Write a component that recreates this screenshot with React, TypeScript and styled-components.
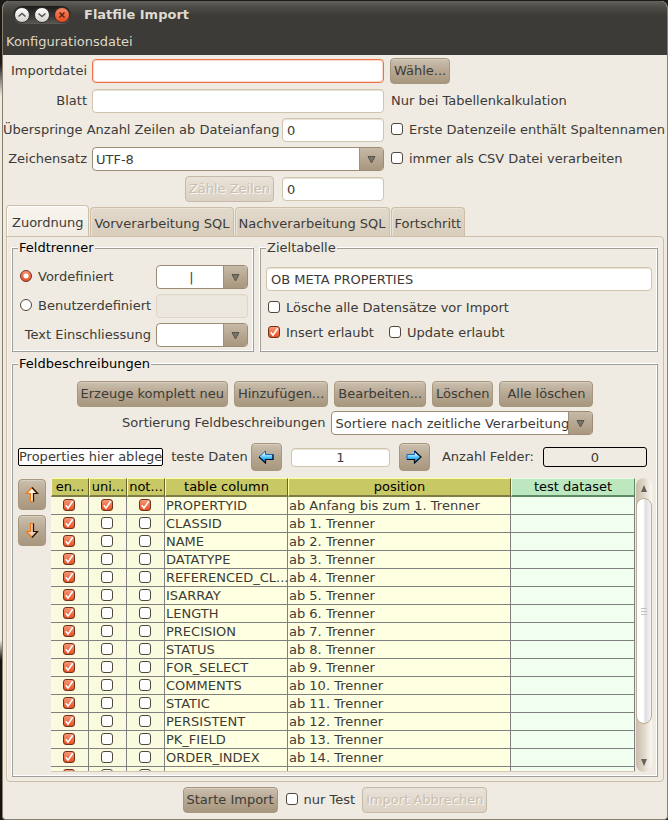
import React from "react";
import styled, { createGlobalStyle, css } from "styled-components";

const GlobalStyle = createGlobalStyle`
  * { box-sizing: border-box; }
  body { margin: 0; }
  body, button, input, select {
    font-family: "DejaVu Sans", sans-serif;
    font-size: 13px;
    line-height: 16px;
    color: #3c3b37;
  }
`;

const Desktop = styled.div`
  height: 100vh;
  min-height: 640px;
  padding: 1px 0 0 2px;
  background: linear-gradient(#1c1b1a 0 64px, #ecebe4 96px 640px, #151413 660px);
`;

const Window = styled.main`
  height: 100%;
  display: flex;
  flex-direction: column;
  background: #efeae2;
  border: 1px solid #8a7f6c;
  border-top: 0;
  border-radius: 7px 7px 4px 4px;
  overflow: hidden;
`;

const TitleBar = styled.header`
  display: flex;
  align-items: center;
  gap: 13px;
  height: 29px;
  padding: 0 0 2px 10px;
  background: linear-gradient(#63605a, #4b4944 7px, #3c3b37 15px);
`;

const WindowControls = styled.div`
  display: flex;
  align-items: center;
  gap: 4px;
  height: 18px;
  padding: 0 1px;
  border-radius: 9px;
  background: linear-gradient(#1d1c1a, #3a3935 60%, #5d5b56);
`;

const RoundButton = styled.button<{ $close?: boolean }>`
  display: grid;
  place-items: center;
  width: 16px;
  height: 16px;
  padding: 0;
  border: 1px solid #33322f;
  border-radius: 50%;
  background: ${(p) => (p.$close ? "linear-gradient(#f58a68, #e6481b)" : "linear-gradient(#ffffff, #d2d0cd)")};
`;

const Title = styled.h1`
  margin: 0;
  font-size: 13px;
  line-height: 18px;
  font-weight: bold;
  color: #dfdbd2;
`;

const MenuBar = styled.nav`
  height: 25px;
  padding: 4px 3px;
  background: #3c3b37;
`;

const MenuButton = styled.button`
  padding: 0;
  border: 0;
  background: none;
  color: #dfd8c8;
`;

const Form = styled.div`
  display: grid;
  grid-template-columns: 84px minmax(0, 1fr) 102px 278px;
  grid-template-rows: 26px 24px 24px 24px 26px;
  gap: 5px;
  align-items: center;
  padding-top: 3px;
`;

const FieldLabel = styled.label<{ $wide?: boolean }>`
  text-align: right;
  white-space: nowrap;
  ${(p) => p.$wide && css`grid-column: span 2;`}
`;

const WideSlot = styled.div`
  display: grid;
  grid-column: span 2;
`;

const RightSlot = styled.div`
  grid-column: 4;
  display: flex;
  padding-left: 1px;
`;

const CountSlot = styled.div`
  grid-column: span 2;
  display: flex;
  justify-content: flex-end;
  padding-right: 3px;
`;

const TextInput = styled.input<{ $active?: boolean; $center?: boolean }>`
  width: 100%;
  min-width: 0;
  height: 24px;
  padding: 1px 4px 0;
  border: 1px solid ${(p) => (p.$active ? "#ef7046" : "#cfc4ae")};
  border-radius: 4px;
  background: #fff;
  outline: 0;
  text-align: ${(p) => (p.$center ? "center" : "left")};
  box-shadow: ${(p) => (p.$active ? "inset 0 0 0 1px #fbd9cb" : "inset 0 1px 0 #e9e3d8")};
  &:disabled { background: #ece7de; border-color: #ddd5c7; }
`;

const Button = styled.button<{ $roomy?: boolean }>`
  height: 26px;
  min-width: ${(p) => (p.$roomy ? "94px" : "0")};
  padding: 0 3px;
  white-space: nowrap;
  border: 1px solid #a8977f;
  border-radius: 4px;
  background: linear-gradient(#cbbfae, #b8a994 45%, #a8977e);
  box-shadow: inset 0 1px 0 #d8cebf;
  &:disabled {
    color: #c9bfb0;
    text-shadow: 1px 1px 0 #fbf8f3;
    border-color: #c5b9a7;
    background: linear-gradient(#e9e2d8, #ddd2c4);
    box-shadow: none;
  }
`;

const ComboFrame = styled.span<{ $width?: number }>`
  display: grid;
  grid-template-columns: minmax(0, 1fr) 24px;
  height: 24px;
  width: ${(p) => (p.$width ? `${p.$width}px` : "100%")};
  border: 1px solid #9c8c74;
  border-radius: 4px;
  overflow: hidden;
  background: #fff;
`;

const ComboSelect = styled.select<{ $center?: boolean }>`
  grid-area: 1 / 1 / 2 / 3;
  appearance: none;
  width: 100%;
  padding: 1px 24px 0 3px;
  border: 0;
  background: none;
  outline: 0;
  text-align-last: ${(p) => (p.$center ? "center" : "left")};
`;

const ComboArrow = styled.span`
  grid-area: 1 / 2;
  display: grid;
  place-items: center;
  pointer-events: none;
  border-left: 1px solid #a08f78;
  background: linear-gradient(#c6b9a7, #a8977e);
`;

function Combo(props: { id: string; value: string; label?: string; width?: number; center?: boolean }) {
  return (
    <ComboFrame $width={props.width}>
      <ComboSelect id={props.id} aria-label={props.label} $center={props.center}>
        <option>{props.value}</option>
      </ComboSelect>
      <ComboArrow>
        <svg width="9" height="9" viewBox="0 0 9 9">
          <path d="M1 1.5h7L4.500 8z" fill="#7a7367" stroke="#5a554c" />
        </svg>
      </ComboArrow>
    </ComboFrame>
  );
}

const Mark = styled.span`
  display: grid;
  flex: none;
  width: 12px;
  height: 12px;
  margin-bottom: 2px;
  > * { grid-area: 1 / 1; }
  > svg { visibility: hidden; pointer-events: none; }
  > input:checked + svg { visibility: visible; }
`;

const MarkInput = styled.input`
  appearance: none;
  width: 12px;
  height: 12px;
  margin: 0;
  border: 1px solid #4f483e;
  border-radius: ${(p) => (p.type === "radio" ? "50%" : "3px")};
  background: #fff;
  &:checked {
    border-color: #70301c;
    background: linear-gradient(#f79677, #e9501f);
  }
`;

const CheckLabel = styled.label`
  display: flex;
  align-items: center;
  gap: 6px;
  padding-left: 1px;
  white-space: nowrap;
`;

function CheckMark(props: { checked?: boolean; label?: string }) {
  return (
    <Mark>
      <MarkInput type="checkbox" defaultChecked={props.checked} aria-label={props.label} />
      <svg viewBox="0 0 12 12">
        <path d="M2.800 6.200l2.200 3L9.700 2.200" fill="none" stroke="#fff" strokeWidth="1.600" />
      </svg>
    </Mark>
  );
}

function Check(props: { checked?: boolean; children: string }) {
  return (
    <CheckLabel>
      <CheckMark checked={props.checked} />
      {props.children}
    </CheckLabel>
  );
}

function Radio(props: { checked?: boolean; children: string }) {
  return (
    <CheckLabel>
      <Mark>
        <MarkInput type="radio" name="separator" defaultChecked={props.checked} />
        <svg viewBox="0 0 12 12">
          <circle cx="6" cy="6" r="2.500" fill="#fff" />
        </svg>
      </Mark>
      {props.children}
    </CheckLabel>
  );
}

const Tabs = styled.div`
  display: flex;
  align-items: flex-end;
  gap: 1px;
  margin: 3px 3px 0;
`;

const Tab = styled.button<{ $selected?: boolean }>`
  height: 29px;
  padding: 4px 3px 0;
  white-space: nowrap;
  border: 1px solid #cbbfa9;
  border-bottom: 0;
  border-radius: 4px 4px 0 0;
  background: linear-gradient(#e2d9cb, #d9cdbb);
  box-shadow: inset 1px 1px 0 #e9e2d6;
  ${(p) =>
    p.$selected &&
    css`
      height: 32px;
      padding: 2px 5px 0;
      margin-bottom: -1px;
      background: linear-gradient(#f8f5f0, #efeae2);
      box-shadow: inset 1px 1px 0 #fff;
    `}
`;

const TabPanel = styled.section`
  flex: 1;
  min-height: 0;
  display: flex;
  flex-direction: column;
  gap: 4px;
  margin: 0 3px;
  padding: 3px 5px 4px;
  border: 1px solid #cbbfa9;
  border-radius: 0 4px 4px 4px;
  box-shadow: inset 1px 0 0 #f7f4ee;
`;

const GroupRow = styled.div`
  display: grid;
  grid-template-columns: 242px minmax(0, 1fr);
  gap: 6px;
`;

const Group = styled.fieldset<{ $fill?: boolean }>`
  min-width: 0;
  margin: 0;
  padding: 9px 5px 4px;
  border: 1px solid #a09e99;
  box-shadow: -1px -1px 0 #fff, inset -1px -1px 0 #fff;
  ${(p) =>
    p.$fill &&
    css`
      flex: 1;
      min-height: 0;
      display: flex;
      flex-direction: column;
    `}
`;

const Legend = styled.legend<{ $muted?: boolean }>`
  padding: 0 1px;
  color: ${(p) => (p.$muted ? "#3c3b37" : "#000")};
  background: #efeae2;
`;

const SeparatorGrid = styled.div`
  display: grid;
  grid-template-columns: minmax(0, 1fr) 92px;
  grid-auto-rows: 24px;
  gap: 5px;
  align-items: center;
  padding-left: 1px;
`;

const TargetStack = styled.div`
  display: flex;
  flex-direction: column;
  gap: 9px;
  padding-top: 2px;
`;

const CheckRow = styled.div`
  display: flex;
  gap: 14px;
  padding-left: 1px;
`;

const ActionBlock = styled.div`
  align-self: center;
  display: flex;
  flex-direction: column;
  gap: 4px;
`;

const ActionRow = styled.div`
  display: flex;
  align-items: center;
  justify-content: flex-end;
  gap: 6px;
`;

const TestRow = styled.div`
  display: flex;
  align-items: center;
  margin-top: 8px;
  padding-right: 5px;
`;

const DropTarget = styled.div`
  flex: none;
  display: flex;
  justify-content: center;
  align-items: center;
  min-width: 139px;
  height: 18px;
  margin-right: 8px;
  white-space: nowrap;
  background: #fff;
  border: 1px solid #000;
  border-radius: 2px;
`;

const TestLabel = styled.label`
  white-space: nowrap;
  padding-right: 3px;
`;

const IconButton = styled(Button)<{ $tall?: boolean }>`
  display: grid;
  place-items: center;
  flex: none;
  width: ${(p) => (p.$tall ? "28px" : "31px")};
  height: ${(p) => (p.$tall ? "31px" : "28px")};
  padding: 0;
`;

const IndexInput = styled(TextInput)`
  flex: 1;
  height: 19px;
  margin: 0 9px;
`;

const CountLabel = styled.span`
  padding: 0 9px 0 12px;
  white-space: nowrap;
`;

const Count = styled.output`
  flex: none;
  width: 104px;
  height: 20px;
  padding-top: 2px;
  text-align: center;
  border: 1px solid #000;
  border-radius: 3px;
`;

const TableArea = styled.div`
  flex: 1;
  min-height: 0;
  display: flex;
  margin-top: 7px;
`;

const OrderButtons = styled.div`
  display: flex;
  flex-direction: column;
  gap: 5px;
  padding: 1px 5px 0 0;
`;

const Viewport = styled.div`
  flex: 1;
  min-width: 0;
  overflow: hidden;
  border-bottom: 1px solid #d5c9b3;
`;

const Table = styled.table`
  width: 100%;
  table-layout: fixed;
  border-spacing: 0;
`;

const HeadCell = styled.th<{ $test?: boolean }>`
  height: 19px;
  padding: 0;
  color: #000;
  font-weight: normal;
  white-space: nowrap;
  border-style: solid;
  border-width: 1px 1px 2px;
  border-color: ${(p) => (p.$test ? "#e8fbe8 #5f8a66 #5f8a66 #e8fbe8" : "#ffffa0 #64642c #7d7d45 #ffffa0")};
  background: ${(p) => (p.$test ? "#bde7bf" : "#c8c864")};
`;

const Cell = styled.td<{ $kind?: "mark" | "test" }>`
  height: 18px;
  padding: 0 0 0 1px;
  white-space: nowrap;
  border: solid #808080;
  border-width: 0 1px 1px 0;
  background: ${(p) => (p.$kind === "mark" ? "#fafadf" : p.$kind === "test" ? "#f0fff0" : "#ffffe1")};
  ${Mark} { margin-left: 11px; }
`;

const Scrollbar = styled.div`
  flex: none;
  display: flex;
  flex-direction: column;
  width: 16px;
  margin-left: 1px;
  border-radius: 8px;
  background: linear-gradient(90deg, #c9bca8, #e2dacd 55%, #fbf9f6);
`;

const ScrollStep = styled.button`
  display: grid;
  place-items: center;
  height: 20px;
  padding: 0;
  border: 0;
  background: none;
`;

const ScrollTrack = styled.div`
  flex: 1;
`;

const ScrollThumb = styled.div`
  display: grid;
  place-items: center;
  height: 89%;
  border: 1px solid #bfae94;
  border-radius: 8px;
  background: linear-gradient(90deg, #ffffff 45%, #dedede 60%, #f4f4f4);
`;

const Footer = styled.footer`
  display: flex;
  justify-content: center;
  align-items: center;
  gap: 7px;
  padding: 5px 0 6px;
`;

const rows: string[][] = [
  ["PROPERTYID", "ab Anfang bis zum 1. Trenner"],
  ...[
    "CLASSID", "NAME", "DATATYPE", "REFERENCED_CL...", "ISARRAY", "LENGTH", "PRECISION", "STATUS",
    "FOR_SELECT", "COMMENTS", "STATIC", "PERSISTENT", "PK_FIELD", "ORDER_INDEX", "",
  ].map((name, i) => [name, name && `ab ${i + 1}. Trenner`]),
];

function BlueArrow({ right }: { right?: boolean }) {
  const shape = right ? "M15 7L8.500 1v3.500H1v5h7.500V13z" : "M1 7l6.500-6v3.500H15v5H7.500V13z";
  return (
    <svg width="16" height="14" viewBox="0 0 16 14">
      <defs>
        <linearGradient id={right ? "blueRight" : "blueLeft"} x1="0" y1="0" x2="0" y2="1">
          <stop offset="0.250" stopColor="#c9f2ff" />
          <stop offset="0.600" stopColor="#38b4f6" />
          <stop offset="1" stopColor="#1679dd" />
        </linearGradient>
      </defs>
      <path d={shape} fill={right ? "url(#blueRight)" : "url(#blueLeft)"} stroke="#1265c4" />
      <path
        d={right ? "M1 9.500h7.500V13L15 7 8.500 1" : "M1 7l6.500 6V9.500H15v-5"}
        fill="none"
        stroke="#08101e"
        strokeWidth="1.200"
      />
    </svg>
  );
}

function OrangeArrow({ down }: { down?: boolean }) {
  return (
    <svg width="14" height="17" viewBox="0 0 14 17">
      <path
        d={down ? "M5.500 1.500v8H1.500L7 15.500l5.500-6h-4v-8z" : "M7 1.500l-5.500 6h4v8h3v-8h4z"}
        fill={down ? "#e6cfc0" : "#fff4e0"}
        stroke="#f07812"
        strokeWidth="1.200"
      />
      <path
        d={down ? "M8.500 1.500v8h4L7 15.500" : "M7 1.500l5.500 6h-4v8"}
        fill="none"
        stroke="#20140a"
        strokeWidth="1.200"
      />
    </svg>
  );
}

export default function App() {
  return (
    <>
      <GlobalStyle />
      <Desktop>
        <Window>
          <TitleBar>
            <WindowControls>
              <RoundButton aria-label="Einrollen">
                <svg width="10" height="10" viewBox="0 0 10 10">
                  <path d="M1.500 6.500L5 3.500l3.500 3" fill="none" stroke="#55534e" strokeWidth="1.500" />
                </svg>
              </RoundButton>
              <RoundButton aria-label="Minimieren">
                <svg width="10" height="10" viewBox="0 0 10 10">
                  <path d="M1.500 3.500l3.500 3 3.500-3" fill="none" stroke="#55534e" strokeWidth="1.500" />
                </svg>
              </RoundButton>
              <RoundButton $close aria-label="Schließen">
                <svg width="10" height="10" viewBox="0 0 10 10">
                  <path d="M2.500 2.500l5 5m0-5l-5 5" fill="none" stroke="#5d2415" strokeWidth="1.500" />
                </svg>
              </RoundButton>
            </WindowControls>
            <Title>Flatfile Import</Title>
          </TitleBar>
          <MenuBar>
            <MenuButton>Konfigurationsdatei</MenuButton>
          </MenuBar>

          <Form>
            <FieldLabel htmlFor="file">Importdatei</FieldLabel>
            <WideSlot><TextInput id="file" $active /></WideSlot>
            <RightSlot><Button>Wähle...</Button></RightSlot>

            <FieldLabel htmlFor="sheet">Blatt</FieldLabel>
            <WideSlot><TextInput id="sheet" /></WideSlot>
            <RightSlot><CheckLabel as="span">Nur bei Tabellenkalkulation</CheckLabel></RightSlot>

            <FieldLabel htmlFor="skip" $wide>Überspringe Anzahl Zeilen ab Dateianfang</FieldLabel>
            <TextInput id="skip" defaultValue="0" />
            <RightSlot><Check>Erste Datenzeile enthält Spaltennamen</Check></RightSlot>

            <FieldLabel htmlFor="charset">Zeichensatz</FieldLabel>
            <WideSlot><Combo id="charset" value="UTF-8" /></WideSlot>
            <RightSlot><Check>immer als CSV Datei verarbeiten</Check></RightSlot>

            <CountSlot><Button disabled>Zähle Zeilen</Button></CountSlot>
            <TextInput aria-label="Anzahl Zeilen" defaultValue="0" />
          </Form>

          <Tabs role="tablist">
            <Tab role="tab" aria-selected $selected>Zuordnung</Tab>
            <Tab role="tab">Vorverarbeitung SQL</Tab>
            <Tab role="tab">Nachverarbeitung SQL</Tab>
            <Tab role="tab">Fortschritt</Tab>
          </Tabs>

          <TabPanel role="tabpanel">
            <GroupRow>
              <Group>
                <Legend>Feldtrenner</Legend>
                <SeparatorGrid>
                  <Radio checked>Vordefiniert</Radio>
                  <Combo id="separator" label="Trennzeichen" value="|" center />
                  <Radio>Benutzerdefiniert</Radio>
                  <TextInput aria-label="Eigenes Trennzeichen" disabled />
                  <FieldLabel htmlFor="quote">Text Einschliessung</FieldLabel>
                  <Combo id="quote" value="" />
                </SeparatorGrid>
              </Group>
              <Group>
                <Legend $muted>Zieltabelle</Legend>
                <TargetStack>
                  <TextInput aria-label="Zieltabelle" defaultValue="OB META PROPERTIES" />
                  <CheckRow><Check>Lösche alle Datensätze vor Import</Check></CheckRow>
                  <CheckRow>
                    <Check checked>Insert erlaubt</Check>
                    <Check>Update erlaubt</Check>
                  </CheckRow>
                </TargetStack>
              </Group>
            </GroupRow>

            <Group $fill>
              <Legend>Feldbeschreibungen</Legend>
              <ActionBlock>
                <ActionRow>
                  <Button>Erzeuge komplett neu</Button>
                  <Button>Hinzufügen...</Button>
                  <Button>Bearbeiten...</Button>
                  <Button>Löschen</Button>
                  <Button $roomy>Alle löschen</Button>
                </ActionRow>
                <ActionRow>
                  <label htmlFor="sorting">Sortierung Feldbeschreibungen</label>
                  <Combo id="sorting" width={262} value="Sortiere nach zeitliche Verarbeitung" />
                </ActionRow>
              </ActionBlock>

              <TestRow>
                <DropTarget>Properties hier ablege</DropTarget>
                <TestLabel htmlFor="record">teste Daten</TestLabel>
                <IconButton aria-label="Vorheriger Datensatz"><BlueArrow /></IconButton>
                <IndexInput id="record" $center defaultValue="1" />
                <IconButton aria-label="Nächster Datensatz"><BlueArrow right /></IconButton>
                <CountLabel>Anzahl Felder:</CountLabel>
                <Count>0</Count>
              </TestRow>

              <TableArea>
                <OrderButtons>
                  <IconButton $tall aria-label="Nach oben"><OrangeArrow /></IconButton>
                  <IconButton $tall aria-label="Nach unten"><OrangeArrow down /></IconButton>
                </OrderButtons>
                <Viewport>
                  <Table>
                    <colgroup>
                      <col width="38" />
                      <col width="38" />
                      <col width="38" />
                      <col width="123" />
                      <col />
                      <col width="124" />
                    </colgroup>
                    <thead>
                      <tr>
                        <HeadCell>en...</HeadCell>
                        <HeadCell>uni...</HeadCell>
                        <HeadCell>not...</HeadCell>
                        <HeadCell>table column</HeadCell>
                        <HeadCell>position</HeadCell>
                        <HeadCell $test>test dataset</HeadCell>
                      </tr>
                    </thead>
                    <tbody>
                      {rows.map(([name, position], i) => (
                        <tr key={i}>
                          <Cell $kind="mark"><CheckMark checked label="enabled" /></Cell>
                          <Cell $kind="mark"><CheckMark checked={i === 0} label="unique" /></Cell>
                          <Cell $kind="mark"><CheckMark checked={i === 0} label="not null" /></Cell>
                          <Cell>{name}</Cell>
                          <Cell>{position}</Cell>
                          <Cell $kind="test" />
                        </tr>
                      ))}
                    </tbody>
                  </Table>
                </Viewport>
                <Scrollbar>
                  <ScrollStep aria-label="Aufwärts">
                    <svg width="6" height="7" viewBox="0 0 6 7"><path d="M3 0l3 7H0z" fill="#66625b" /></svg>
                  </ScrollStep>
                  <ScrollTrack>
                    <ScrollThumb>
                      <svg width="6" height="7" viewBox="0 0 6 7">
                        <path d="M0 .5h6M0 3.500h6M0 6.500h6" stroke="#c4c2be" />
                      </svg>
                    </ScrollThumb>
                  </ScrollTrack>
                  <ScrollStep aria-label="Abwärts">
                    <svg width="6" height="7" viewBox="0 0 6 7"><path d="M0 0h6L3 7z" fill="#66625b" /></svg>
                  </ScrollStep>
                </Scrollbar>
              </TableArea>
            </Group>
          </TabPanel>

          <Footer>
            <Button>Starte Import</Button>
            <Check>nur Test</Check>
            <Button disabled>Import Abbrechen</Button>
          </Footer>
        </Window>
      </Desktop>
    </>
  );
}
